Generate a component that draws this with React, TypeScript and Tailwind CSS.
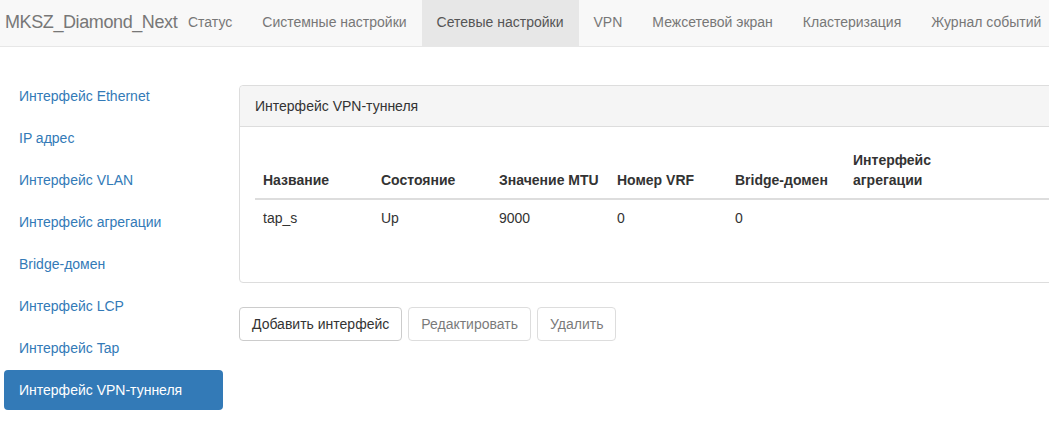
import React from 'react';

const navItems = ['Статус', 'Системные настройки', 'Сетевые настройки', 'VPN', 'Межсетевой экран', 'Кластеризация', 'Журнал событий'];

const sideItems = [
    'Интерфейс Ethernet',
    'IP адрес',
    'Интерфейс VLAN',
    'Интерфейс агрегации',
    'Bridge-домен',
    'Интерфейс LCP',
    'Интерфейс Tap',
    'Интерфейс VPN-туннеля',
];

const columns = ['Название', 'Состояние', 'Значение MTU', 'Номер VRF', 'Bridge-домен', 'Интерфейс агрегации'];
const rows = [['tap_s', 'Up', '9000', '0', '0', '']];

const App: React.FC = () => {
    return (
        <div
            className="min-h-[427px] w-[1049px] overflow-hidden bg-white text-[14px] leading-[20px] text-[#333]"
            style={{ fontFamily: '"Liberation Sans", Arial, sans-serif' }}
        >
            {/* top navbar */}
            <nav className="flex h-[47px] items-stretch whitespace-nowrap border-b border-[#e7e7e7] bg-[#f8f8f8]">
                <div className="flex w-[173px] shrink-0 items-center pb-[3px] pl-[5px] text-[18px] tracking-[-0.4px] text-[#777]">
                    MKSZ_Diamond_Next
                </div>
                {navItems.map((item) => (
                    <div
                        key={item}
                        className={`flex shrink-0 items-center px-[15px] pb-[3px] ${
                            item === 'Сетевые настройки' ? 'bg-[#e7e7e7] text-[#555]' : 'text-[#777]'
                        }`}
                    >
                        {item}
                    </div>
                ))}
            </nav>

            <div className="flex pl-[4px] pt-[29px]">
                {/* side menu */}
                <ul className="flex w-[219px] shrink-0 flex-col gap-[2px]">
                    {sideItems.map((item) => (
                        <li
                            key={item}
                            className={`rounded-[4px] px-[15px] py-[10px] ${
                                item === 'Интерфейс VPN-туннеля' ? 'bg-[#337ab7] text-white' : 'text-[#337ab7]'
                            }`}
                        >
                            {item}
                        </li>
                    ))}
                </ul>

                <div className="ml-[16px] pt-[9px]">
                    <div className="w-[840px] rounded-[4px] border border-[#ddd]">
                        <div className="rounded-t-[4px] border-b border-[#ddd] bg-[#f5f5f5] px-[15px] py-[10px]">
                            Интерфейс VPN-туннеля
                        </div>
                        <div className="px-[15px] pb-[26px] pt-[15px]">
                            <table className="mb-[20px] w-full table-fixed border-collapse text-left">
                                <thead>
                                    <tr className="border-b-2 border-[#ddd]">
                                        {columns.map((c) => (
                                            <th key={c} className="w-[118px] p-[8px] align-bottom font-bold">
                                                {c}
                                            </th>
                                        ))}
                                        <th className="p-[8px]"></th>
                                    </tr>
                                </thead>
                                <tbody>
                                    {rows.map((r, i) => (
                                        <tr key={i}>
                                            {r.map((cell, j) => (
                                                <td key={j} className="p-[8px]">
                                                    {cell}
                                                </td>
                                            ))}
                                            <td className="p-[8px]"></td>
                                        </tr>
                                    ))}
                                </tbody>
                            </table>
                        </div>
                    </div>

                    <div className="mt-[24px] flex gap-[6px]">
                        <button className="h-[34px] rounded-[4px] border border-[#ccc] bg-white px-[12px] text-[#333]">
                            Добавить интерфейс
                        </button>
                        <button className="h-[34px] rounded-[4px] border border-[#ccc] bg-white px-[12px] text-[#333] opacity-65" disabled>
                            Редактировать
                        </button>
                        <button className="h-[34px] rounded-[4px] border border-[#ccc] bg-white px-[12px] text-[#333] opacity-65" disabled>
                            Удалить
                        </button>
                    </div>
                </div>
            </div>
        </div>
    );
};

export default App;
